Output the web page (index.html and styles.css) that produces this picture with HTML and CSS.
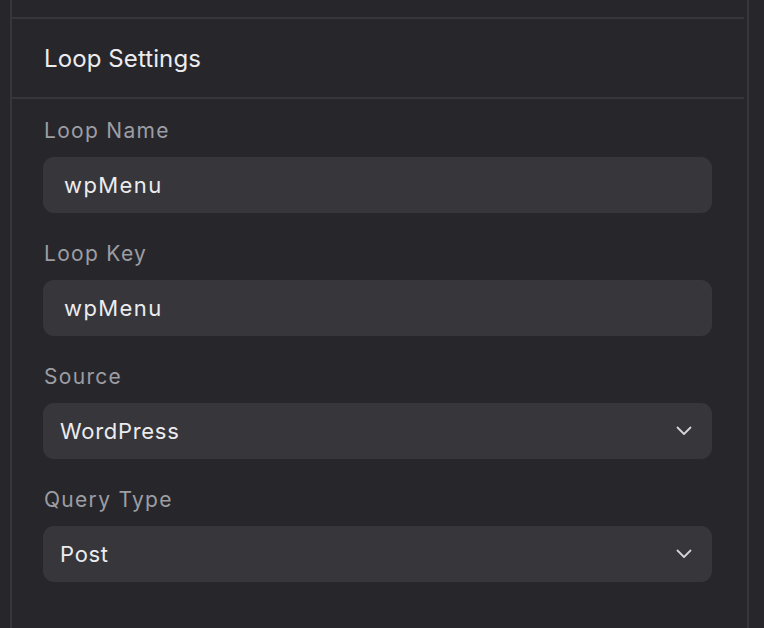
FILE: index.html
```html
<!DOCTYPE html>
<html lang="en">
<head>
<meta charset="utf-8">
<title>Loop Settings</title>
<link rel="stylesheet" href="styles.css">
</head>
<body>
<div class="sidebar">
  <div class="top-spacer"></div>
  <div class="section-head">
    <h2 class="section-title">Loop Settings</h2>
  </div>
  <div class="fields">
    <div class="field">
      <label class="field-label">Loop Name</label>
      <div class="input">wpMenu</div>
    </div>
    <div class="field">
      <label class="field-label">Loop Key</label>
      <div class="input">wpMenu</div>
    </div>
    <div class="field">
      <label class="field-label">Source</label>
      <div class="select">
        <span>WordPress</span>
        <svg class="chevron" width="16" height="10" viewBox="0 0 16 10"><path d="M1.5 1.5 L8 8 L14.5 1.5" fill="none" stroke="#d4d4d8" stroke-width="1.8" stroke-linecap="round" stroke-linejoin="round"/></svg>
      </div>
    </div>
    <div class="field">
      <label class="field-label">Query Type</label>
      <div class="select">
        <span>Post</span>
        <svg class="chevron" width="16" height="10" viewBox="0 0 16 10"><path d="M1.5 1.5 L8 8 L14.5 1.5" fill="none" stroke="#d4d4d8" stroke-width="1.8" stroke-linecap="round" stroke-linejoin="round"/></svg>
      </div>
    </div>
  </div>
</div>
</body>
</html>
```
FILE: styles.css
```css
* { box-sizing: border-box; }
html, body {
  margin: 0;
  height: 100%;
  background: #27272b;
}
body {
  font-family: Inter, "Noto Sans", sans-serif;
  color: #e4e4e7;
}
.sidebar {
  margin-left: 10px;
  width: 739px;
  height: 100%;
  border-left: 2px solid #36363b;
  border-right: 2px solid #36363b;
}
.top-spacer {
  height: 19px;
  margin-right: 3px;
  border-bottom: 2px solid #36363b;
}
.section-head {
  height: 80px;
  margin-right: 3px;
  border-bottom: 2px solid #36363b;
  padding-left: 32px;
  display: flex;
  align-items: center;
}
.section-title {
  margin: 0;
  font-size: 24px;
  font-weight: 400;
  letter-spacing: 0.1px;
  color: #ececef;
}
.fields {
  padding: 20px 35px 0 31px;
  display: flex;
  flex-direction: column;
  gap: 29px;
}
.field {
  display: flex;
  flex-direction: column;
  gap: 14px;
}
.field-label {
  padding-left: 1px;
  font-size: 21px;
  line-height: 24px;
  letter-spacing: 1.3px;
  color: #9d9da4;
}
.input, .select {
  height: 56px;
  border-radius: 11px;
  background: #36363b;
  font-size: 22px;
  font-weight: 400;
  color: #ececef;
  display: flex;
  align-items: center;
}
.input {
  padding-left: 21px;
  letter-spacing: 1.4px;
}
.select {
  padding: 0 20px 0 17px;
  justify-content: space-between;
  letter-spacing: 0.7px;
}
.chevron { display: block; }
```
